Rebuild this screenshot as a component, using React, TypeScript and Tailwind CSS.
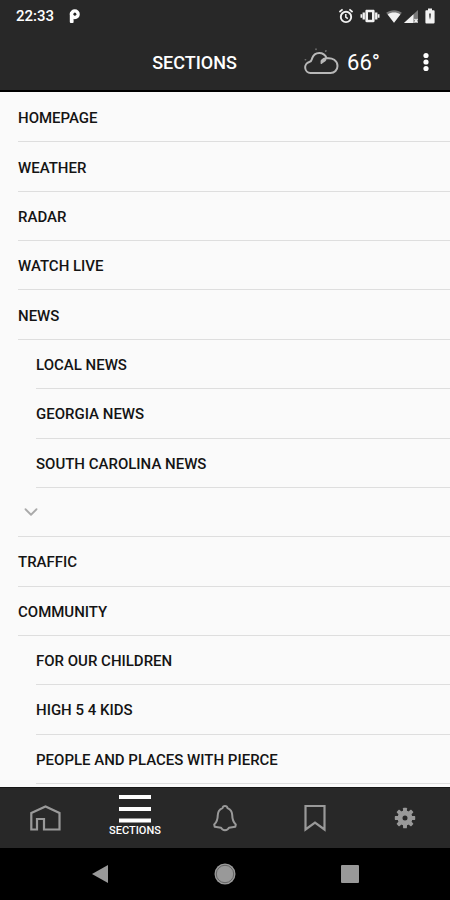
import React, { useState } from 'react';
import { ChevronDown } from 'lucide-react';

interface SectionItem {
    label: string;
    nested?: boolean;
    toggle?: boolean;
}

const sections: SectionItem[] = [
    { label: 'HOMEPAGE' },
    { label: 'WEATHER' },
    { label: 'RADAR' },
    { label: 'WATCH LIVE' },
    { label: 'NEWS' },
    { label: 'LOCAL NEWS', nested: true },
    { label: 'GEORGIA NEWS', nested: true },
    { label: 'SOUTH CAROLINA NEWS', nested: true },
    { label: 'Show more news sections', toggle: true },
    { label: 'TRAFFIC' },
    { label: 'COMMUNITY' },
    { label: 'FOR OUR CHILDREN', nested: true },
    { label: 'HIGH 5 4 KIDS', nested: true },
    { label: 'PEOPLE AND PLACES WITH PIERCE', nested: true },
];

const StatusBar = () => (
    <div className="flex h-8 items-center justify-between pl-4 pr-[10px] text-white">
        <div className="flex items-center gap-3.5">
            <span className="text-[15px] leading-5 font-medium">22:33</span>
            {/* App notification badge */}
            <svg className="w-3 h-3.5" viewBox="0 0 12 14">
                <circle cx="6.800" cy="5.200" r="3.200" fill="none" stroke="currentColor" strokeWidth="3.600" />
                <rect x="1.800" y="3" width="3.800" height="11" rx="1" fill="currentColor" />
                <circle cx="6.900" cy="5.200" r="1.400" fill="#282828" />
            </svg>
        </div>
        <div className="flex items-center gap-0.5 text-[#f2f2f2]">
            {/* Alarm */}
            <svg className="w-4 h-4" viewBox="0 0 16 16" fill="none" stroke="currentColor" strokeWidth="1.900">
                <circle cx="8" cy="8.900" r="5.200" />
                <path d="M1.400 4 4.600 1.400M14.600 4l-3.200-2.600" strokeWidth="1.700" />
                <path d="M7.800 6v3.200l2 1.500" strokeWidth="1.500" />
            </svg>
            {/* Vibrate */}
            <svg className="mx-1 w-5 h-4" viewBox="0 0 20 16" fill="currentColor">
                <path fillRule="evenodd" d="M6.600 1.800h6.800c.7 0 1.200.5 1.200 1.200v10c0 .7-.5 1.200-1.200 1.200H6.600c-.7 0-1.200-.5-1.200-1.200V3c0-.7.5-1.200 1.200-1.200zM8 4.200v7.600h4V4.200z" />
                <path d="M2.600 4.500h2.300v7H2.600zM.5 6.300h1.700v3.400H.5zM15.100 4.500h2.300v7h-2.300zM17.800 6.300h1.700v3.400h-1.700z" />
            </svg>
            {/* Wi-Fi */}
            <svg className="w-4 h-4" viewBox="0 0 16 16" fill="currentColor">
                <path d="M8 14.800.2 4.800C2.400 3.200 5.100 2.300 8 2.300s5.600.9 7.800 2.500z" opacity=".4" />
                <path d="M8 14.800 1.700 6.500C3.500 5.200 5.800 4.600 8 4.600s4.500.6 6.300 1.900z" />
            </svg>
            {/* Signal */}
            <svg className="w-3.5 h-4" viewBox="0 0 14 16" fill="currentColor">
                <path d="M0 15 14 2v13z" opacity=".4" />
                <path d="M0 15 9.500 6.200V15z" />
                <path d="m10.500 11 3 3.500m0-3.500-3 3.500" stroke="currentColor" strokeWidth="1.200" />
            </svg>
            {/* Battery */}
            <svg className="mx-1 w-3 h-4" viewBox="0 0 12 16" fill="currentColor">
                <path fillRule="evenodd" d="M4 .6h4v1.600h1.700c.5 0 .9.400.9.900v11.500c0 .5-.4.900-.9.900H2.300c-.5 0-.9-.4-.9-.9V3.100c0-.5.400-.9.900-.9H4zM5.200 5.500l.2 3.500.6 2.800.6-2.800.2-3.500z" />
            </svg>
        </div>
    </div>
);

const CloudIcon = () => (
    <svg className="w-9 h-7" viewBox="0 0 36 28" fill="none" stroke="currentColor" strokeWidth="2" strokeLinecap="round" strokeLinejoin="round">
        <path d="M7.500 26a5.600 5.600 0 0 1-1.200-11c2.300-.4 2.200-1.600 2.800-3.600C10.300 7.800 13 6 16.200 6c3.600 0 6.200 2 7.500 5.300 5.600-.9 10.800 2.200 10.800 7.700 0 4-3 7-7 7z" />
        <path d="M18.500 16c.2-2.700 2-4.400 5-4.700" />
        <path d="M19.300 14.200l2.200-1.400" strokeWidth="3.400" />
        <path d="M13 2v.4M23 3.800l-.3.300M2.300 12.700h.3" strokeWidth="1.600" opacity=".5" />
    </svg>
);

const HomeIcon = () => (
    <svg className="w-8 h-7" viewBox="0 0 32 28" fill="none" stroke="currentColor" strokeWidth="2.200">
        <path d="M2.300 9 16.500 2.500 30.500 9v16.500H15V15H8v10.500H2.300z" />
    </svg>
);

const BellIcon = () => (
    <svg className="w-7 h-7" viewBox="0 0 28 28" fill="none" stroke="currentColor" strokeWidth="2" strokeLinejoin="round">
        <path d="M14 2c1.500 0 2.300.8 2.500 2.100 2.900 1.200 4.600 3.600 4.700 6.800.1 4.600.6 7 3.600 9.600l-.5 2.300-6.300.900c-.8 1.800-2.200 2.500-4 2.500s-3.200-.7-4-2.500l-6.300-.9-.5-2.300c3-2.600 3.500-5 3.600-9.600.1-3.200 1.800-5.600 4.700-6.800C11.700 2.800 12.500 2 14 2z" />
    </svg>
);

const BookmarkIcon = () => (
    <svg className="w-6 h-7" viewBox="0 0 24 28" fill="none" stroke="currentColor" strokeWidth="2.200">
        <path d="M2.500 2h19v23.500L12 18.500l-9.500 7z" />
    </svg>
);

const gearTeeth = [0, 45, 90, 135, 180, 225, 270, 315];

const GearIcon = () => (
    <svg className="w-[22px] h-[22px]" viewBox="0 0 22 22" fill="currentColor">
        {gearTeeth.map((angle) => (
            <path key={angle} d="M8.900 6 9.100 1.300q.1-.5.600-.5h2.600q.5 0 .6.500L13.100 6z" transform={`rotate(${angle} 11 11)`} />
        ))}
        <circle cx="11" cy="11" r="5" fill="none" stroke="currentColor" strokeWidth="5" />
    </svg>
);

const tabs = [
    { id: 'home', name: 'Home', icon: <HomeIcon /> },
    { id: 'sections', name: 'Sections', icon: null },
    { id: 'alerts', name: 'Alerts', icon: <BellIcon /> },
    { id: 'saved', name: 'Saved', icon: <BookmarkIcon /> },
    { id: 'settings', name: 'Settings', icon: <GearIcon /> },
];

const SectionRow: React.FC<{ item: SectionItem; onToggle: () => void; open: boolean }> = ({ item, onToggle, open }) => (
    <li className={`flex min-h-10 flex-1 ${item.nested ? 'pl-9' : 'pl-[18px]'}`}>
        {item.toggle ? (
            <button
                onClick={onToggle}
                aria-expanded={open}
                aria-label={item.label}
                className="flex flex-1 items-center border-b border-[#dedede] pl-0.5 text-[#aaaaaa]"
            >
                <ChevronDown className="w-[22px] h-[22px]" />
            </button>
        ) : (
            <a href="#" className="flex flex-1 items-center border-b border-[#dedede] pt-0.5">
                {item.label}
            </a>
        )}
    </li>
);

export default function App() {
    const [activeTab, setActiveTab] = useState('sections');
    const [open, setOpen] = useState(false);

    return (
        <div className="flex h-screen flex-col bg-[#fafafa] font-['Roboto',sans-serif] text-[#141414]">
            <header className="border-b-2 border-black bg-[#282828] text-white">
                <StatusBar />
                <div className="flex h-[58px] items-center pr-[10px]">
                    <h1 className="flex-1 pl-[86px] pt-1 text-center text-lg font-medium">SECTIONS</h1>
                    <div className="flex items-center gap-2">
                        <span className="text-[#b8b8b8]"><CloudIcon /></span>
                        <span className="pt-1 text-[22px] leading-7">66°</span>
                    </div>
                    <button aria-label="More options" className="ml-8 flex h-10 w-7 items-center justify-center pt-0.5">
                        <svg className="w-2 h-5" viewBox="0 0 8 20" fill="currentColor">
                            <circle cx="4" cy="3.500" r="2.600" />
                            <circle cx="4" cy="10" r="2.600" />
                            <circle cx="4" cy="16.500" r="2.600" />
                        </svg>
                    </button>
                </div>
            </header>

            <main className="flex min-h-0 flex-1 flex-col overflow-y-auto pt-px pb-[3px]">
                <ul className="flex flex-1 flex-col text-[15px] leading-5 font-medium">
                    {sections.map((item) => (
                        <SectionRow key={item.label} item={item} open={open} onToggle={() => setOpen(!open)} />
                    ))}
                </ul>
            </main>

            <nav className="grid h-[61px] shrink-0 grid-cols-5 border-t border-[#161616] bg-[#282828]">
                {tabs.map((tab) => (
                    <button
                        key={tab.id}
                        aria-label={tab.name}
                        onClick={() => setActiveTab(tab.id)}
                        className={`flex flex-col items-center justify-center ${activeTab === tab.id ? 'pb-1 text-white' : 'text-[#999999]'}`}
                    >
                        {tab.id === 'sections' ? (
                            <>
                                <svg className="w-8 h-7" viewBox="0 0 32 28" fill="currentColor">
                                    <path d="M0 0h32v4H0zM0 12h32v4H0zM0 23.500h32v4H0z" />
                                </svg>
                                <span className="pt-0.5 text-[11px] leading-3 font-medium">SECTIONS</span>
                            </>
                        ) : (
                            tab.icon
                        )}
                    </button>
                ))}
            </nav>

            <div className="shrink-0 bg-black text-[#999999]">
                <div className="mx-auto grid h-[52px] w-5/6 grid-cols-3">
                    <button aria-label="Back" className="flex items-center justify-center">
                        <svg className="w-4 h-5" viewBox="0 0 16 20" fill="currentColor">
                            <path d="M0 10 16 1v18z" />
                        </svg>
                    </button>
                    <button aria-label="Home screen" className="flex items-center justify-center">
                        <svg className="w-[22px] h-[22px]" viewBox="0 0 22 22" fill="currentColor">
                            <circle cx="11" cy="11" r="10.500" />
                            <circle cx="11" cy="11" r="8.700" fill="none" stroke="#555555" strokeWidth=".8" />
                        </svg>
                    </button>
                    <button aria-label="Recent apps" className="flex items-center justify-center">
                        <svg className="w-[18px] h-[18px]" viewBox="0 0 18 18" fill="currentColor">
                            <rect width="18" height="18" rx="1" />
                        </svg>
                    </button>
                </div>
            </div>
        </div>
    );
}
